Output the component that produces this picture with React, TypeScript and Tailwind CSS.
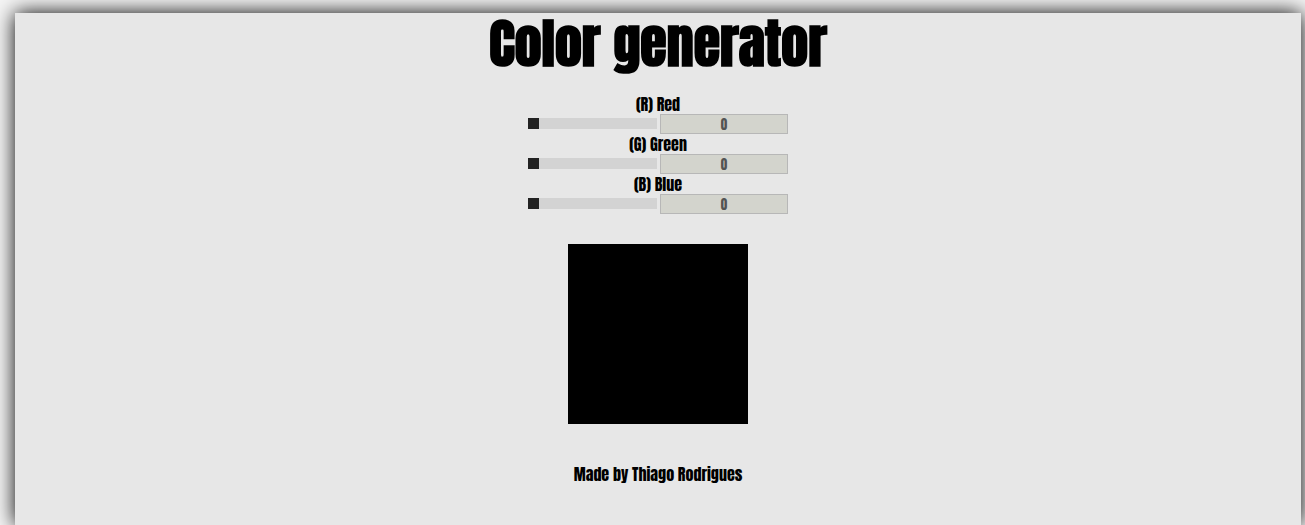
import { useState } from "react";

type Channel = { id: string; label: string };

const channels: Channel[] = [
  { id: "red", label: "(R) Red" },
  { id: "green", label: "(G) Green" },
  { id: "blue", label: "(B) Blue" },
];

export default function App() {
  const [values, setValues] = useState<number[]>([0, 0, 0]);

  const update = (index: number, value: number) =>
    setValues(values.map((v, i) => (i === index ? value : v)));

  return (
    <div className="flex min-h-screen flex-col overflow-hidden bg-[#f5f5f5] pt-[13px] pr-1 pl-[15px] font-['Impact','Anton','Roboto_Condensed','Liberation_Sans',sans-serif] text-black">
      <main className="flex grow flex-col items-center bg-[#e7e7e7] pb-8 text-base leading-5 shadow-[0_0_20px_#000000]">
        <h1 className="text-[54px] leading-[61px] font-bold">Color generator</h1>
        <form className="mt-5 flex flex-col">
          {channels.map((channel, index) => (
            <div key={channel.id} className="flex flex-col items-center">
              <label htmlFor={channel.id}>{channel.label}</label>
              <div className="flex h-5 gap-[3px]">
                <input
                  id={channel.id}
                  type="range"
                  min={0}
                  max={255}
                  value={values[index]}
                  onChange={(e) => update(index, Number(e.target.value))}
                  className="mt-1 h-[11px] w-[129px] appearance-none bg-[#d3d3d3] [&::-webkit-slider-thumb]:size-[11px] [&::-webkit-slider-thumb]:appearance-none [&::-webkit-slider-thumb]:bg-[#222222]"
                />
                <input
                  type="text"
                  aria-label={`${channel.label} value`}
                  value={values[index]}
                  disabled
                  className="h-5 w-32 border border-[#b7b7b7] bg-[#d3d4cd] text-center text-[13px] leading-4 text-[#545454]"
                />
              </div>
            </div>
          ))}
        </form>
        <div
          className="mt-[30px] size-[180px]"
          style={{ backgroundColor: `rgb(${values.join(",")})` }}
        />
        <footer className="mt-10">Made by Thiago Rodrigues</footer>
      </main>
    </div>
  );
}
